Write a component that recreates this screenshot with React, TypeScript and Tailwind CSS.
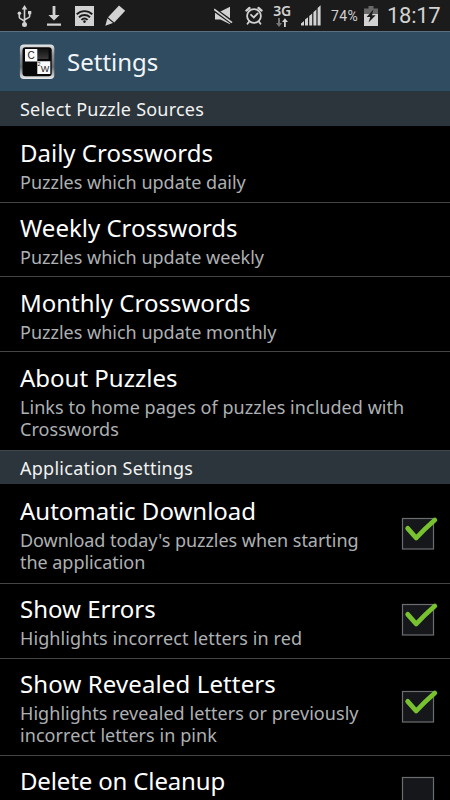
type RowProps = {
  title: string;
  lines: string[];
  size: string;
  pad: string;
  heading?: string;
  sub?: string;
  box?: string;
  checked?: boolean;
};

function Checkbox({ checked }: { checked: boolean }) {
  return (
    <svg width="38" height="35" viewBox="0 0 38 35" className="block" aria-hidden="true">
      <rect x="1.5" y="2.5" width="31" height="30.5" fill="#15171a" stroke="#6b6d70" strokeWidth="1.2" />
      {checked && (
        <path d="M6.7 12.3 L15.2 22 C19.8 17 24 12.5 33.8 4" fill="none" stroke="#78c22f" strokeWidth="4.8" strokeLinejoin="round" strokeLinecap="round" />
      )}
    </svg>
  );
}

function Row({ title, lines, size, pad, heading = "", sub = "", box, checked = false }: RowProps) {
  return (
    <div className={`flex shrink-0 justify-between overflow-hidden border-b border-[#454545] pl-5 pr-[11px] ${size}`}>
      <div className={pad}>
        <div className={`whitespace-nowrap text-[24px] leading-[33px] text-white ${heading}`}>{title}</div>
        <div className={`whitespace-nowrap pt-[2px] text-[18px] leading-[22.4px] text-[#adb1b4] ${sub}`}>
          {lines.map((line) => (
            <div key={line}>{line}</div>
          ))}
        </div>
      </div>
      {box && (
        <div className={box}>
          <Checkbox checked={checked} />
        </div>
      )}
    </div>
  );
}

function StatusBar() {
  return (
    <div className="flex h-[31px] shrink-0 items-center justify-between bg-[#1b1b1b] pl-[17px] pr-[10px] text-[#d2d2d2]">
      <div className="flex items-center">
        <svg width="15" height="24" viewBox="0 0 15 24" fill="none" stroke="#d2d2d2" strokeWidth="1.6" aria-hidden="true">
          <path d="M7.5 4v17M2.3 10v3.2c0 2 5.2 2.5 5.2 4.5M12.7 9.5v2.8c0 2-5.2 2.4-5.2 4.2" />
          <path d="M7.5 1l2.8 4.6H4.7zM11 7h3.3v3.3H11z" fill="#d2d2d2" stroke="none" />
          <circle cx="2.4" cy="9.2" r="1.8" fill="#d2d2d2" stroke="none" />
          <circle cx="7.5" cy="20.6" r="2.5" fill="#d2d2d2" stroke="none" />
        </svg>
        <svg width="16" height="22" viewBox="0 0 16 22" className="ml-[14px]" fill="#d2d2d2" aria-hidden="true">
          <path d="M6.6 1h2.8v9h4.2L8 15.6 2.4 10h4.2zM1 18.6h14v2.2H1z" />
        </svg>
        <svg width="19" height="20" viewBox="0 0 19 20" className="ml-[13px]" aria-hidden="true">
          <path d="M0 0h19v20H0z" fill="#d2d2d2" />
          <path d="M1.7 8.3c4.5-4.2 11.1-4.2 15.6 0M4 11.2c3.1-2.9 7.9-2.9 11 0M6.4 13.9c1.8-1.6 4.4-1.6 6.2 0" fill="none" stroke="#1b1b1b" strokeWidth="1.9" />
          <circle cx="9.5" cy="15.6" r="1.3" fill="#1b1b1b" />
        </svg>
        <svg width="21" height="21" viewBox="0 0 21 21" className="ml-[11px]" fill="#d2d2d2" aria-hidden="true">
          <path d="M14 .5l6.2 5.2L9.2 17.4 3 12.2z" />
          <path d="M2.4 13.2l5.6 4.9L.3 20.7z" />
        </svg>
      </div>
      <div className="flex items-center">
        <svg width="19" height="20" viewBox="0 0 19 20" aria-hidden="true">
          <path d="M1 5.5h5.5L16 .8v17.4L6.5 13.5H1z" fill="#d2d2d2" />
          <path d="M0 3.4L18 16.4" stroke="#1b1b1b" strokeWidth="4.2" />
          <path d="M0 3.2L18 16.6" stroke="#d2d2d2" strokeWidth="1.8" />
        </svg>
        <svg width="18" height="20" viewBox="0 0 18 20" className="ml-[12px]" fill="none" stroke="#d2d2d2" strokeWidth="1.8" strokeLinecap="round" aria-hidden="true">
          <circle cx="9" cy="10" r="6.9" />
          <path d="M6 8.8l2.8 2.6 3.8-3.9M4.2 15.5l-1.7 2.3M13.8 15.5l1.7 2.3" />
          <path d="M1.4 4.6l3.1-2.6M16.6 4.6l-3.1-2.6" strokeWidth="2.3" />
        </svg>
        <div className="ml-[10px] flex w-[18px] flex-col items-center">
          <span className="font-['Noto_Sans',sans-serif] text-[14px] font-semibold leading-[11px] tracking-[-0.4px]">3G</span>
          <svg width="12" height="9" viewBox="0 0 12 9" className="mt-[2px]" aria-hidden="true">
            <path d="M2 0h2v5h2L3 9 0 5h2z" fill="#777" />
            <path d="M8 9h1.8V4H12L8.9.2 6 4h2z" fill="#d2d2d2" />
          </svg>
        </div>
        <svg width="20" height="21" viewBox="0 0 20 21" className="ml-[10px]" fill="#d2d2d2" aria-hidden="true">
          <path d="M0 20.5V18.5l3-2.5v4.5zM4 20.5v-6l3-2.3v8.3zM8.2 20.5V11l3-2.4v11.9zM12.4 20.5V7.2l3-2.7v16zM16.6 20.5V3l3-2.7v20.2z" />
        </svg>
        <span className="ml-[10px] w-[29px] font-['Roboto',sans-serif] text-[14px] leading-[20px] tracking-[0.4px]">74%</span>
        <svg width="14" height="20" viewBox="0 0 14 20" className="ml-[4px]" aria-hidden="true">
          <path d="M4.5 0h5v2.5H14V9H0V2.5h4.5z" fill="#686868" />
          <path d="M0 8h14v12H0z" fill="#d2d2d2" />
          <path d="M9.5 3.5L2.6 11h3.7l-1.8 5.5 7.2-7.2H8z" fill="#1b1b1b" />
        </svg>
        <span className="ml-[9px] w-[53px] whitespace-nowrap font-['Roboto',sans-serif] text-[22px] leading-[28px] tracking-[-0.3px]">18:17</span>
      </div>
    </div>
  );
}

function AppIcon() {
  return (
    <svg width="36" height="36" viewBox="0 0 36 36" className="block" aria-hidden="true">
      <defs>
        <linearGradient id="frame" x1="0" y1="0" x2="0" y2="1">
          <stop offset="0" stopColor="#e6e6e6" />
          <stop offset="0.3" stopColor="#8d9296" />
          <stop offset="0.65" stopColor="#666b6f" />
          <stop offset="1" stopColor="#eeeeee" />
        </linearGradient>
        <linearGradient id="gloss" x1="0" y1="0" x2="0" y2="1">
          <stop offset="0" stopColor="#111" />
          <stop offset="1" stopColor="#3a3a3a" />
        </linearGradient>
      </defs>
      <rect x="0.9" y="0.5" width="34.4" height="34.6" rx="4" fill="url(#frame)" />
      <rect x="3.5" y="3.3" width="29.2" height="29" rx="3" fill="#080808" />
      <path d="M18 5h11.5v10H18z" fill="url(#gloss)" />
      <path d="M6 5H18.3V17.5H6zM18.3 17.2h13V30h-13z" fill="#fafafa" />
      <text x="12" y="15" textAnchor="middle" fontSize="10" fontFamily="Liberation Sans, sans-serif" fill="#222">C</text>
      <text x="25.9" y="28.2" textAnchor="middle" fontSize="9" fontFamily="Liberation Sans, sans-serif" fill="#222">W</text>
      <text x="18.6" y="22.2" fontSize="5.5" fontFamily="Liberation Sans, sans-serif" fill="#222">2</text>
    </svg>
  );
}

export default function App() {
  return (
    <div className="flex h-[800px] w-[450px] flex-col overflow-hidden bg-black font-['Noto_Sans',sans-serif]">
      <StatusBar />
      <div className="flex h-[60px] shrink-0 items-center border-t border-[#5b7080] bg-[#304c61] pl-[19px]">
        <AppIcon />
        <h1 className="ml-[12px] text-[24px] leading-[32px] text-[#f2f6f8]">Settings</h1>
      </div>
      <div className="h-[35px] shrink-0 border-t border-[#243540] bg-[#2b353b] pl-5 pt-[5px] text-[18px] leading-[25px] tracking-[0.22px] text-[#f2f2f2]">
        Select Puzzle Sources
      </div>
      <Row title="Daily Crosswords" lines={["Puzzles which update daily"]} size="h-[77px]" pad="pt-[10px]" />
      <Row title="Weekly Crosswords" lines={["Puzzles which update weekly"]} size="h-[74px]" pad="pt-[8px]" />
      <Row title="Monthly Crosswords" lines={["Puzzles which update monthly"]} size="h-[75px]" pad="pt-[9px]" />
      <Row title="About Puzzles" lines={["Links to home pages of puzzles included with", "Crosswords"]} size="h-[98px] border-b-0" pad="pt-[9px]" sub="tracking-[0.05px]" />
      <div className="h-[34px] shrink-0 border-t border-[#40484c] bg-[#2b353b] pl-5 pt-[5px] text-[18px] leading-[25px] tracking-[0.26px] text-[#f2f2f2]">
        Application Settings
      </div>
      <Row title="Automatic Download" lines={["Download today's puzzles when starting", "the application"]} size="h-[100px]" pad="pt-[10px]" sub="tracking-[-0.04px]" box="pt-[32px]" checked />
      <Row title="Show Errors" lines={["Highlights incorrect letters in red"]} size="h-[75px]" pad="pt-[8px]" sub="tracking-[0.1px]" box="pt-[18px]" checked />
      <Row title="Show Revealed Letters" lines={["Highlights revealed letters or previously", "incorrect letters in pink"]} size="h-[97px]" pad="pt-[8px]" heading="tracking-[0.12px]" sub="tracking-[0.06px]" box="pt-[30px]" checked />
      <Row title="Delete on Cleanup" lines={[]} size="h-[75px]" pad="pt-[8px]" heading="tracking-[-0.15px]" box="pt-[19px]" />
    </div>
  );
}
